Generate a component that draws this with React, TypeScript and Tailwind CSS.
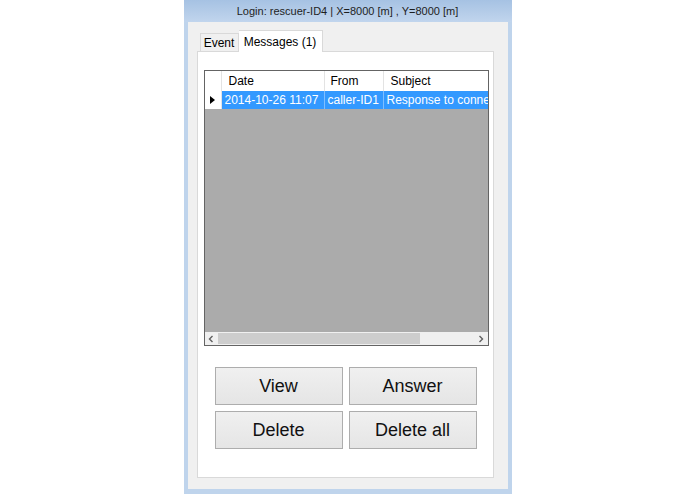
import React from 'react';

const font = { fontFamily: '"Liberation Sans", Arial, sans-serif' };

function Chevron({ dir }: { dir: 'left' | 'right' }): JSX.Element {
  return (
    <svg width="6" height="8" viewBox="0 0 6 8" className="text-[#606060]">
      {dir === 'left' ? (
        <polyline points="4.5,1 1.5,4 4.5,7" fill="none" stroke="currentColor" strokeWidth="1.4" />
      ) : (
        <polyline points="1.5,1 4.5,4 1.5,7" fill="none" stroke="currentColor" strokeWidth="1.4" />
      )}
    </svg>
  );
}

function MessageGrid(): JSX.Element {
  return (
    <div className="flex h-[276px] w-[285px] flex-col border border-[#646464] text-[12px] text-black">
      {/* header */}
      <div className="flex h-[20px] shrink-0 bg-white">
        <div className="w-[17px] border-r border-[#e3e3e3]" />
        <div className="flex w-[103px] items-center border-r border-[#e3e3e3] pl-[7px]">Date</div>
        <div className="flex w-[59px] items-center border-r border-[#e3e3e3] pl-[6px]">From</div>
        <div className="flex flex-1 items-center pl-[7px]">Subject</div>
      </div>
      {/* selected row */}
      <div className="flex h-[18px] shrink-0 overflow-hidden whitespace-nowrap">
        <div className="flex w-[17px] items-center justify-center border-r border-[#e3e3e3] bg-white">
          <svg width="5" height="8" viewBox="0 0 5 8">
            <polygon points="0,0 5,4 0,8" fill="#000" />
          </svg>
        </div>
        <div className="flex w-[103px] items-center border-r border-[#7fbfff] bg-[#3399ff] pl-[3px] text-white">
          2014-10-26 11:07
        </div>
        <div className="flex w-[59px] items-center border-r border-[#7fbfff] bg-[#3399ff] pl-[3px] text-white">
          caller-ID1
        </div>
        <div className="flex flex-1 items-center overflow-hidden bg-[#3399ff] pl-[3px] text-white">
          Response to connection
        </div>
      </div>
      <div className="flex-1 bg-[#ababab]" />
      {/* horizontal scrollbar */}
      <div className="flex h-[13px] shrink-0 items-center bg-[#f0f0f0]">
        <div className="flex w-[13px] justify-center">
          <Chevron dir="left" />
        </div>
        <div className="h-[11px] w-[202px] bg-[#cdcdcd]" />
        <div className="flex-1" />
        <div className="flex w-[13px] justify-center">
          <Chevron dir="right" />
        </div>
      </div>
    </div>
  );
}

function WinButton({ label }: { label: string }): JSX.Element {
  return (
    <button className="flex h-[38px] items-center justify-center border border-[#adadad] bg-gradient-to-b from-[#f0f0f0] to-[#e5e5e5] text-[18px] text-[#111]">
      {label}
    </button>
  );
}

export default function App(): JSX.Element {
  return (
    <div className="h-[494px] w-[695px] bg-white" style={font}>
      <div className="mx-auto flex h-[494px] w-[328px] flex-col">
        <div className="flex h-[22px] shrink-0 items-center justify-center bg-gradient-to-b from-[#a6c2e3] to-[#c1d5ed] text-[11px] text-[#1e1e1e]">
          Login: rescuer-ID4 | X=8000 [m] , Y=8000 [m]
        </div>
        <div className="flex flex-1 flex-col border-x-4 border-b-[5px] border-[#bfd4ec] bg-[#f0f0f0] pb-[11px] pl-[9px] pr-[14px] pt-[8px]">
          {/* tab strip */}
          <div className="flex h-[21px] shrink-0 items-end pl-[3px] text-[12px] text-black">
            <div className="flex h-[18px] w-[39px] items-center justify-center border border-b-0 border-[#d9d9d9] bg-[#f0f0f0]">
              Event
            </div>
            <div className="relative z-10 -mb-px flex h-[22px] w-[84px] items-center justify-center border border-b-0 border-l-0 border-[#d9d9d9] bg-white pt-px">
              Messages (1)
            </div>
          </div>
          {/* tab page */}
          <div className="flex flex-1 flex-col border border-[#d9d9d9] bg-white pl-[6px] pt-[18px]">
            <MessageGrid />
            <div className="ml-[11px] mt-[21px] grid w-[262px] grid-cols-2 gap-[6px]">
              <WinButton label="View" />
              <WinButton label="Answer" />
              <WinButton label="Delete" />
              <WinButton label="Delete all" />
            </div>
          </div>
        </div>
      </div>
    </div>
  );
}
